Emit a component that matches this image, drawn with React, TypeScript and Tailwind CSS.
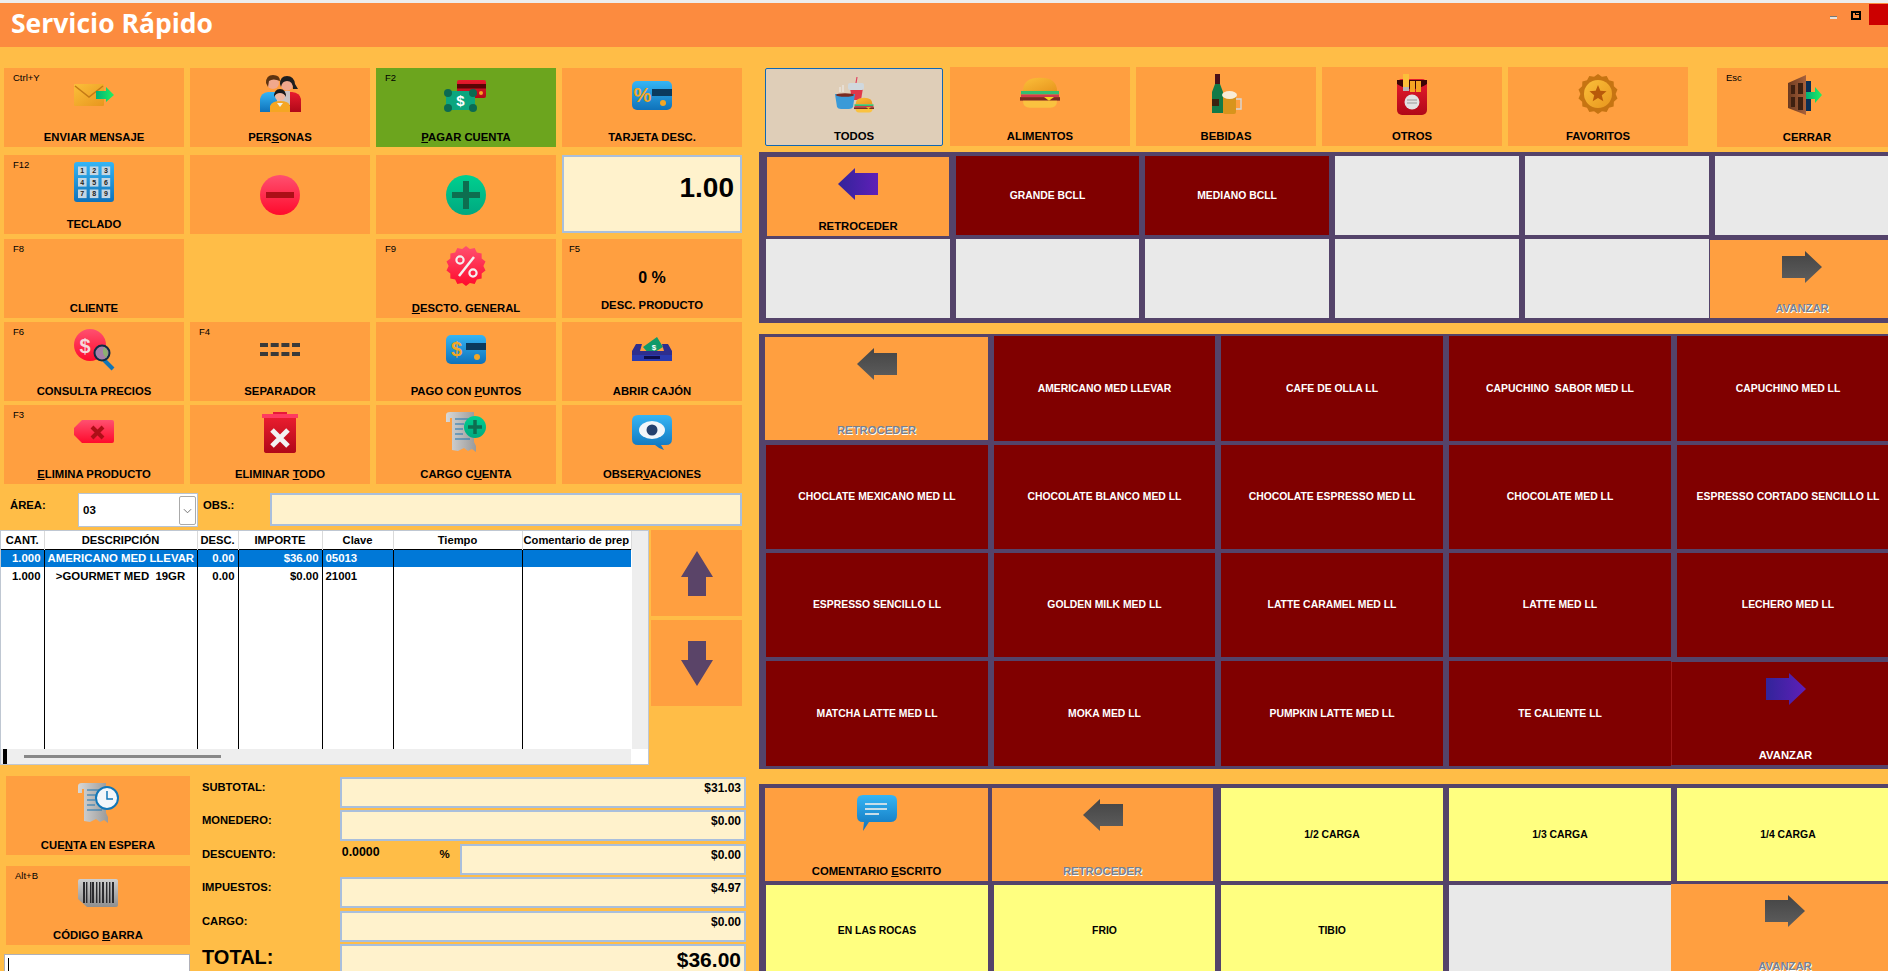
import React from "react";

type Kid = React.ReactNode;
const S = ({ children }: { children: Kid }) => (
  <svg viewBox="0 0 40 40" className="w-10 h-10 block overflow-visible">{children}</svg>
);
const burst = (n: number, R: number, r: number, cx = 20, cy = 20) =>
  Array.from({ length: n * 2 }, (_, i) => {
    const a = (Math.PI * i) / n;
    const q = i % 2 ? r : R;
    return `${(cx + q * Math.sin(a)).toFixed(2)},${(cy - q * Math.cos(a)).toFixed(2)}`;
  }).join(" ");

const Defs = () => (
  <svg className="absolute w-0 h-0">
    <defs>
      <linearGradient id="gR" x1="0" y1="0" x2="0" y2="1"><stop offset="0" stopColor="#FF5070" /><stop offset="1" stopColor="#FF0A2C" /></linearGradient>
      <linearGradient id="gRD" x1="0" y1="0" x2="0" y2="1"><stop offset="0" stopColor="#E81C2E" /><stop offset="1" stopColor="#B00818" /></linearGradient>
      <linearGradient id="gG" x1="0" y1="0" x2="0" y2="1"><stop offset="0" stopColor="#00D08F" /><stop offset="1" stopColor="#00A880" /></linearGradient>
      <linearGradient id="gB" x1="0" y1="0" x2="0" y2="1"><stop offset="0" stopColor="#35B5F5" /><stop offset="1" stopColor="#0F72BA" /></linearGradient>
      <linearGradient id="gO" x1="0" y1="0" x2="1" y2="1"><stop offset="0" stopColor="#FBBF3A" /><stop offset="1" stopColor="#E8961E" /></linearGradient>
      <linearGradient id="gY" x1="0" y1="0" x2="1" y2="0"><stop offset="0" stopColor="#D8D8D8" /><stop offset="1" stopColor="#9A9A9A" /></linearGradient>
      <linearGradient id="gGy" x1="0" y1="0" x2="0" y2="1"><stop offset="0" stopColor="#CFCFCF" /><stop offset="1" stopColor="#8F8F8F" /></linearGradient>
      <linearGradient id="gA" x1="0" y1="0" x2="0" y2="1"><stop offset="0" stopColor="#444444" /><stop offset="1" stopColor="#5E5E5E" /></linearGradient>
      <linearGradient id="gP" x1="0" y1="0" x2="1" y2="0"><stop offset="0" stopColor="#32249A" /><stop offset="1" stopColor="#5F1FB8" /></linearGradient>
      <linearGradient id="gAr" x1="0" y1="0" x2="1" y2="0"><stop offset="0" stopColor="#00B27A" /><stop offset="1" stopColor="#22F060" /></linearGradient>
      <linearGradient id="gBrown" x1="0" y1="0" x2="1" y2="0"><stop offset="0" stopColor="#6B3A20" /><stop offset="1" stopColor="#A8623C" /></linearGradient>
    </defs>
  </svg>
);

const Mail = () => (
  <S>
    <rect x="0" y="9" width="30" height="22" rx="1" fill="url(#gO)" />
    <path d="M1 11 L15 22 L29 11" fill="none" stroke="#C47A16" strokeWidth="1.5" />
    <path d="M22 16 H32 V12 L40 20 L32 27 V24 H22 Z" fill="url(#gAr)" />
  </S>
);
const People = () => (
  <S>
    <path d="M0 37 V24 Q1 18 8 17 L18 17 V37 Z" fill="url(#gB)" />
    <path d="M22 17 L32 17 Q40 18 41 24 V37 H22 Z" fill="url(#gRD)" />
    <rect x="17" y="16" width="13" height="14" fill="#C9C4C4" />
    <circle cx="13" cy="8" r="6" fill="#F0A88C" />
    <path d="M6 8 Q6 0 13 0 Q20 0 20 6 Q13 3 9 6 L8 12 Z" fill="#5E3410" />
    <circle cx="27" cy="9" r="6.5" fill="#F0A88C" />
    <path d="M20 9 Q20 1 27 1 Q34 1 35 9 L38 14 L33 14 Q33 6 27 6 Q22 6 21 12 Z" fill="#1E1E1E" />
    <path d="M10 37 V31 Q12 26 20 26 Q29 26 30 31 V37 Z" fill="#F5A623" />
    <circle cx="20" cy="21" r="5" fill="#F0B8A0" />
    <path d="M14 22 Q14 14 20 14 Q26 14 26 22 Q24 18 20 18 Q16 18 14 22 Z" fill="#1A1A1A" />
    <path d="M17 28 L20 32 L23 28 Z" fill="#F0F0E8" />
  </S>
);
const Pay = () => (
  <S>
    <rect x="11" y="5" width="29" height="18" rx="2" fill="url(#gRD)" />
    <rect x="11" y="9" width="29" height="4.5" fill="#5A0505" />
    <circle cx="35" cy="18" r="2" fill="#F5A623" />
    <rect x="0" y="16" width="29" height="19" rx="2" fill="#0CA67F" />
    <circle cx="2" cy="18" r="4" fill="#0B6A52" />
    <circle cx="27" cy="18" r="4" fill="#0B6A52" />
    <circle cx="2" cy="33" r="4" fill="#0B6A52" />
    <circle cx="27" cy="33" r="4" fill="#0B6A52" />
    <text x="14.5" y="30.5" textAnchor="middle" fontSize="15" fontWeight="700" fill="#fff" fontFamily="Liberation Sans">$</text>
  </S>
);
const CardIcon = ({ sym }: { sym: string }) => (
  <S>
    <rect x="0" y="6" width="40" height="29" rx="5" fill="url(#gB)" />
    <rect x="20" y="14" width="20" height="7" fill="#0B3A5E" />
    <circle cx="31" cy="28" r="3" fill="#F5A623" />
    <text x="10.5" y="27" textAnchor="middle" fontSize="20" fontWeight="700" fill="#F5A623" fontFamily="Liberation Sans">{sym}</text>
  </S>
);
const Keypad = () => (
  <S>
    <rect x="0" y="0" width="40" height="40" rx="3" fill="url(#gB)" />
    {[1, 2, 3, 4, 5, 6, 7, 8, 9].map((n, i) => {
      const x = 4 + (i % 3) * 11.8;
      const y = 4.5 + Math.floor(i / 3) * 11.5;
      return (
        <g key={n}>
          <rect x={x} y={y} width="8.6" height="8.6" fill="#C5D6E2" />
          <text x={x + 4.3} y={y + 6.6} textAnchor="middle" fontSize="7" fontWeight="700" fill="#222" fontFamily="Liberation Sans">{n}</text>
        </g>
      );
    })}
  </S>
);
const Minus = () => (
  <S>
    <circle cx="20" cy="20" r="20" fill="url(#gR)" />
    <rect x="6" y="17" width="28" height="6" fill="#AD0F17" />
  </S>
);
const Plus = () => (
  <S>
    <circle cx="20" cy="20" r="20" fill="url(#gG)" />
    <rect x="6" y="17" width="28" height="6" fill="#0E6E50" />
    <rect x="17" y="6" width="6" height="28" fill="#0E6E50" />
  </S>
);
const Badge = () => (
  <S>
    <polygon points={burst(14, 20, 17.4)} fill="url(#gR)" />
    <path d="M28 11 L13 30" stroke="#F4F0F0" strokeWidth="2.5" />
    <circle cx="14" cy="14" r="3.6" fill="none" stroke="#F4F0F0" strokeWidth="2.2" />
    <circle cx="27" cy="27" r="3.6" fill="none" stroke="#F4F0F0" strokeWidth="2.2" />
  </S>
);
const Search = () => (
  <S>
    <circle cx="16" cy="16" r="16" fill="url(#gR)" />
    <text x="11" y="24" textAnchor="middle" fontSize="20" fontWeight="700" fill="#F5D8DC" fontFamily="Liberation Sans">$</text>
    <path d="M30 31 L39 40" stroke="#1275B5" strokeWidth="4" />
    <circle cx="28" cy="24" r="7.5" fill="#A57FA8" stroke="#0D2C44" strokeWidth="2" />
    <path d="M30 18 A7 7 0 0 1 32 29 Q27 24 30 18 Z" fill="#8CB070" />
  </S>
);
const Sep = () => (
  <S>
    {[14, 23].map((y) =>
      [0, 10.7, 21.4, 32].map((x) => <rect key={`${x}${y}`} x={x} y={y} width="8" height="4" fill="#3A3A3A" />)
    )}
  </S>
);
const Drawer = () => (
  <S>
    <path d="M11 18 L25 8 L31 18 L18 26 Z" fill="#0F9A6A" />
    <text x="22" y="21" textAnchor="middle" fontSize="8" fontWeight="700" fill="#fff" fontFamily="Liberation Sans">$</text>
    <path d="M4 15 H10 L8 22 H32 L30 15 H36 L40 22 V32 H0 V22 Z" fill="#2E2E8E" />
    <rect x="0" y="26" width="40" height="6" fill="#2A3AB0" />
    <rect x="12" y="27" width="16" height="3" fill="#0E0E4A" />
  </S>
);
const Back = () => (
  <S>
    <path d="M8 8 H38 Q40 8 40 10 V29 Q40 31 38 31 H8 L0 23 V16 Z" fill="url(#gR)" />
    <path d="M18 15 L29 26 M29 15 L18 26" stroke="#AD0F17" strokeWidth="4" />
  </S>
);
const Trash = () => (
  <S>
    <g transform="translate(2 0)">
      <rect x="11" y="0" width="14" height="3" fill="#E8183A" />
      <rect x="0" y="2" width="36" height="4" fill="#FF3A60" />
      <path d="M2 6 H34 V39 Q34 41 31 41 H5 Q2 41 2 39 Z" fill="url(#gRD)" />
      <path d="M10 18 L26 34 M26 18 L10 34" stroke="#F2F2F2" strokeWidth="5" />
    </g>
  </S>
);
const Scroll = () => (
  <>
    <path d="M0 3 Q0 0 4 0 H28 V30 L30 34 L30 40 L26 37 L22 39 L18 36 L12 39 L6 38 V6 H4 V10 H0 Z" fill="url(#gY)" />
    <path d="M9 7 H22 M9 12 H18 M9 17 H17 M9 22 H17 M9 27 H24" stroke="#1A75B0" strokeWidth="1.2" />
  </>
);
const ReceiptPlus = () => (
  <S>
    <Scroll />
    <circle cx="29" cy="15" r="11" fill="url(#gG)" />
    <path d="M22 15 H36 M29 8 V22" stroke="#0E6E50" strokeWidth="3.5" />
  </S>
);
const ReceiptClock = () => (
  <S>
    <Scroll />
    <circle cx="29" cy="15" r="11" fill="#F2F6FA" stroke="#1277B8" strokeWidth="2" />
    <path d="M29 8 V16 H35" fill="none" stroke="#1277B8" strokeWidth="1.5" />
  </S>
);
const Eye = () => (
  <S>
    <g transform="translate(0 3)">
      <path d="M6 0 H34 Q40 0 40 6 V24 Q40 30 34 30 H29 L32 35 Q26 33 23 30 H6 Q0 30 0 24 V6 Q0 0 6 0 Z" fill="url(#gB)" />
      <ellipse cx="20" cy="15" rx="13" ry="9" fill="#F2F6FA" />
      <circle cx="20" cy="15" r="5.5" fill="#24406E" />
    </g>
  </S>
);
const Barcode = () => (
  <S>
    <path d="M0 8 Q0 6 2 6 H38 Q40 6 40 8 V32 Q40 34 38 34 H9 L0 26 Z" fill="url(#gGy)" />
    {[5, 8, 12, 14, 18, 21, 24, 28, 31, 34].map((x, i) => (
      <rect key={x} x={x} y="9" width={i % 3 === 0 ? 2 : 1.4} height="21" fill="#2A2A2E" />
    ))}
  </S>
);
const ArrowL = ({ fill }: { fill: string }) => (
  <S>
    <polygon points="0,20 17,4 17,9 40,9 40,31 17,31 17,36" fill={fill} />
  </S>
);
const ArrowR = ({ fill }: { fill: string }) => (
  <S>
    <polygon points="40,20 23,4 23,9 0,9 0,31 23,31 23,36" fill={fill} />
  </S>
);
const BurgerShape = () => (
  <>
    <path d="M3 17 Q3 2 20 2 Q37 2 37 17 Z" fill="url(#gO)" />
    <rect x="1" y="17" width="38" height="4" fill="#33C070" />
    <rect x="1" y="21" width="38" height="3" fill="#D23A4C" />
    <rect x="0" y="24" width="40" height="4" fill="#7A2A20" />
    <path d="M24 24 H34 L29 28 Z" fill="#F8D020" />
    <path d="M3 28 H37 Q37 36 30 36 H10 Q3 36 3 28 Z" fill="#FAC240" />
  </>
);
const Burger = () => <S><g transform="translate(0 2) scale(1 0.88)"><BurgerShape /></g></S>;
const Combo = () => (
  <S>
    <path d="M16 12 L29 12 L27 24 H18 Z" fill="#E0384A" />
    <rect x="14" y="7" width="16" height="7" rx="2" fill="#D0D8DE" />
    <path d="M22 7 L23 1" stroke="#E04060" strokeWidth="1.2" />
    <path d="M9 9 V16 M6 11 V16" stroke="#F0F0F0" strokeWidth="1.2" opacity="0.8" />
    <path d="M1 18 H21 L19 31 Q18 33 15 33 H7 Q4 33 3 31 Z" fill="#3A9AD8" />
    <ellipse cx="11" cy="19" rx="9" ry="1.8" fill="#7A2A20" />
    <g transform="translate(20 21) scale(0.5 0.43)"><BurgerShape /></g>
  </S>
);
const Drinks = () => (
  <S>
    <rect x="9" y="0" width="5" height="10" fill="#4A1018" />
    <path d="M9 10 H14 L17 18 V39 H6 V18 Z" fill="#127A48" />
    <rect x="6" y="25" width="7" height="7" fill="#3A2210" />
    <path d="M17 21 H30 V38 Q30 40 28 40 H19 Q17 40 17 38 Z" fill="#D8941C" />
    <ellipse cx="23.5" cy="21" rx="7.5" ry="4" fill="#F8ECD8" />
    <path d="M30 25 H35 V35 H30" fill="none" stroke="#D8D8D8" strokeWidth="1.4" />
  </S>
);
const Fries = () => (
  <S>
    <rect x="5" y="5" width="30" height="36" rx="5" fill="url(#gRD)" />
    <path d="M5 6 H35 V10 Q20 20 5 10 Z" fill="#3A0606" />
    <rect x="11" y="0" width="6" height="17" fill="#FBBF3A" />
    <rect x="11" y="13" width="6" height="4" fill="#B8B8B8" />
    <rect x="18" y="7" width="5" height="11" fill="#F5A623" />
    <rect x="24" y="7" width="5" height="11" fill="#F5A623" />
    <circle cx="20" cy="28" r="7.5" fill="#E2E2E2" />
    <path d="M15 26 H25 M15 29 H25" stroke="#999" strokeWidth="1.2" />
  </S>
);
const Medal = () => (
  <S>
    <polygon points={burst(14, 20, 17.6)} fill="#C67412" />
    <circle cx="20" cy="20" r="14" fill="url(#gO)" />
    <polygon points={burst(5, 9, 4)} fill="#B85A0A" />
  </S>
);
const Door = () => (
  <S>
    <rect x="19" y="6" width="5" height="30" fill="#0B2F55" />
    <path d="M1 8 L19 0 V40 L1 33 Z" fill="url(#gBrown)" />
    <path d="M4 10 H8 V19 H4 Z M11 8 H16 V19 H11 Z M4 22 H8 V32 H4 Z M11 22 H16 V35 H11 Z" fill="#3E2010" />
    <path d="M19 17 H28 V12 L35 20 L28 28 V24 H19 Z" fill="url(#gAr)" />
  </S>
);
const Comment = () => (
  <S>
    <path d="M6 0 H34 Q40 0 40 6 V20 Q40 27 34 27 H12 L6 36 L7 27 H6 Q0 27 0 21 V6 Q0 0 6 0 Z" fill="url(#gB)" />
    <path d="M8 9 H30 M8 14 H30 M8 19 H22" stroke="#C8DDE8" strokeWidth="2" />
  </S>
);

const Btn = ({
  label, hot, icon, className = "", tone = "", center = false,
}: {
  label?: Kid; hot?: string; icon?: Kid; className?: string; tone?: string; center?: boolean;
}) => (
  <div className={`relative flex flex-col items-center ${center ? "justify-center" : "justify-between"} pt-[7px] pb-[3px] ${tone || "bg-[#FF9F40]"} ${className}`}>
    {hot && <span className="absolute left-[9px] top-[3px] text-[9.5px] leading-[13px] font-normal text-black">{hot}</span>}
    <div className="w-10 h-10 shrink-0">{icon}</div>
    {label && <div className="text-[11.3px] leading-[14px] font-bold whitespace-nowrap">{label}</div>}
  </div>
);
const Dis = ({ children }: { children: Kid }) => (
  <span className="text-[#76818F] [text-shadow:1px_1px_0_#ffffff]">{children}</span>
);

const Cell = ({ t, tone = "maroon" }: { t?: string; tone?: "maroon" | "yellow" | "grey" }) => (
  <div
    className={`flex items-center justify-center whitespace-pre text-[10.4px] font-bold ${
      tone === "maroon" ? "bg-[#800000] text-white" : tone === "yellow" ? "bg-[#FFFF80] text-black" : "bg-[#E9E9E9]"
    }`}
  >
    {t}
  </div>
);

const Field = ({ v, big = false, className = "" }: { v: string; big?: boolean; className?: string }) => (
  <div className={`h-[31px] bg-[#FFF2CC] border-2 border-[#A9BFDC] text-right pr-[3px] font-bold ${big ? "text-[21px] leading-[26px] pt-[1px]" : "text-[12px] leading-[14px] pt-[2px]"} ${className}`}>
    {v}
  </div>
);
const TotalRow = ({ l, v }: { l: string; v: string }) => (
  <div className="flex h-[31px] mb-[2.4px]">
    <div className="w-[139px] pl-px text-[11.2px] leading-[14px] pt-[3px] font-bold">{l}</div>
    <Field v={v} className="w-[406px]" />
  </div>
);

const thead = ["CANT.", "DESCRIPCIÓN", "DESC.", "IMPORTE", "Clave", "Tiempo", "Comentario de prep"];
const widths = ["w-[43px]", "w-[153px]", "w-[41px]", "w-[84px]", "w-[71px]", "w-[129px]", "w-[109px]"];
const td = "border-r border-black px-[3px] whitespace-pre overflow-hidden";

export default function App() {
  return (
    <div className="w-[1888px] h-[971px] overflow-hidden bg-[#FFBD47] text-black font-['Liberation_Sans',Arial,sans-serif] flex flex-col">
      <Defs />
      <div className="h-[3px] bg-[#EDEDED] shrink-0" />
      <header className="h-[44px] shrink-0 bg-[#FC8B3F] flex justify-between">
        <h1 className="pl-[11px] text-white font-['Open_Sans',sans-serif] font-bold text-[26.5px] leading-[40px] whitespace-nowrap">Servicio Rápido</h1>
        <div className="flex items-start">
          <div className="w-[7px] h-[3px] mt-[13px] bg-[#E8E0D8] border-t border-[#777]" />
          <div className="relative w-[10px] h-[9px] ml-[14px] mt-[8px] border-2 border-black">
            <div className="absolute -top-[2px] -right-[2px] w-[6px] h-[4px] border border-black" />
          </div>
          <div className="w-[19px] h-[21px] ml-[8px] mt-px bg-[#CC0000]" />
        </div>
      </header>

      <div className="flex-1 flex min-h-0">
        {/* left side */}
        <section className="w-[750px] shrink-0 pt-[21px]">
          <div className="ml-[4px] grid grid-cols-[180px_180px_180px_180px] gap-x-[6px] grid-rows-[79px_8px_79px_5px_79px_4px_79px_4px_79px] w-[738px]">
            <Btn hot="Ctrl+Y" icon={<Mail />} label="ENVIAR MENSAJE" />
            <Btn icon={<People />} label={<>PER<u>S</u>ONAS</>} />
            <Btn hot="F2" tone="bg-[#6CA51E]" icon={<Pay />} label={<><u>P</u>AGAR CUENTA</>} />
            <Btn icon={<CardIcon sym="%" />} label="TARJETA DESC." />
            <div className="col-span-4" />
            <Btn hot="F12" icon={<Keypad />} label="TECLADO" />
            <Btn center icon={<Minus />} className="!pt-0 !pb-0" />
            <Btn center icon={<Plus />} className="!pt-0 !pb-0" />
            <div className="h-[78px] bg-[#FFF2CC] border-2 border-[#A9BFDC] text-right pr-[6px] pt-[15px] text-[28px] leading-[32px] font-bold">1.00</div>
            <div className="col-span-4" />
            <Btn hot="F8" label="CLIENTE" />
            <div />
            <Btn hot="F9" icon={<Badge />} label={<><u>D</u>ESCTO. GENERAL</>} />
            <div className="relative bg-[#FF9F40] flex flex-col items-center">
              <span className="absolute left-[7px] top-[3px] text-[9.5px] leading-[13px]">F5</span>
              <div className="mt-[30px] text-[16px] leading-[18px] font-bold">0 %</div>
              <div className="mt-[11px] text-[11.3px] leading-[14px] font-bold">DESC. PRODUCTO</div>
            </div>
            <div className="col-span-4" />
            <Btn hot="F6" icon={<Search />} label="CONSULTA PRECIOS" />
            <Btn hot="F4" icon={<Sep />} label="SEPARADOR" />
            <Btn icon={<CardIcon sym="$" />} label={<>PAGO CON <u>P</u>UNTOS</>} />
            <Btn icon={<Drawer />} label="ABRIR CAJÓN" />
            <div className="col-span-4" />
            <Btn hot="F3" icon={<Back />} label={<><u>E</u>LIMINA PRODUCTO</>} />
            <Btn icon={<Trash />} label={<>ELIMINAR <u>T</u>ODO</>} />
            <Btn icon={<ReceiptPlus />} label={<>CARGO C<u>U</u>ENTA</>} />
            <Btn icon={<Eye />} label={<>OBSER<u>V</u>ACIONES</>} />
          </div>

          <div className="mt-[9px] flex h-[34px] text-[11.3px] font-bold">
            <div className="w-[78px] pl-[10px] pt-[5px] leading-[14px]">ÁREA:</div>
            <div className="w-[120px] h-[34px] bg-white border border-[#B8C4D4] flex justify-between">
              <span className="pl-[4px] pt-[9px] text-[11.5px] leading-[14px]">03</span>
              <div className="w-[17px] m-px mt-[2px] h-[29px] border border-[#AAAAAA] rounded-[2px] flex items-center justify-center">
                <svg viewBox="0 0 10 6" className="w-[9px] h-[6px]"><path d="M1 1 L5 5 L9 1" fill="none" stroke="#666" strokeWidth="1" /></svg>
              </div>
            </div>
            <div className="w-[72px] pl-[5px] pt-[5px] leading-[14px]">OBS.:</div>
            <div className="w-[472px] h-[33px] bg-[#FFF2CC] border-2 border-[#A9BFDC]" />
          </div>

          <div className="mt-[3px] flex">
            <div className="w-[649px] h-[235px] bg-white border border-[#BFC7D2] flex flex-col">
              <div className="flex h-[218px]">
                <table className="w-[630px] h-[218px] table-fixed border-collapse text-[11.4px] font-bold leading-[14px]">
                  <colgroup>{widths.map((w) => <col key={w} className={w} />)}</colgroup>
                  <tbody>
                    <tr className="h-[18px] border-b border-black">
                      {thead.map((h, i) => (
                        <td key={h} className={`border-r border-[#DADADA] text-[11.2px] whitespace-nowrap overflow-hidden ${i === 6 ? "text-left pl-px" : "text-center"}`}>{h}</td>
                      ))}
                    </tr>
                    <tr className="h-[18px] bg-[#0078D7] text-white">
                      <td className={`${td} text-right`}>1.000</td>
                      <td className={`${td} text-center`}>AMERICANO MED LLEVAR</td>
                      <td className={`${td} text-right`}>0.00</td>
                      <td className={`${td} text-right`}>$36.00</td>
                      <td className={`${td} text-left`}>05013</td>
                      <td className={td} />
                      <td className="" />
                    </tr>
                    <tr className="h-[18px]">
                      <td className={`${td} text-right`}>1.000</td>
                      <td className={`${td} text-center`}>{">GOURMET MED  19GR"}</td>
                      <td className={`${td} text-right`}>0.00</td>
                      <td className={`${td} text-right`}>$0.00</td>
                      <td className={`${td} text-left`}>21001</td>
                      <td className={td} />
                      <td className="" />
                    </tr>
                    <tr>
                      {[0, 1, 2, 3, 4, 5].map((i) => <td key={i} className={td} />)}
                      <td />
                    </tr>
                  </tbody>
                </table>
                <div className="w-[17px] bg-[#EEEEEE]" />
              </div>
              <div className="w-[630px] h-[15px] bg-[#EEEEEE] flex items-center">
                <div className="w-[4px] h-[15px] ml-[2px] bg-black" />
                <div className="w-[197px] h-[3px] ml-[17px] bg-[#888888]" />
              </div>
            </div>
            <div className="w-[91px] ml-[2px] flex flex-col gap-[4px]">
              <div className="h-[86px] bg-[#FF9F40] flex items-center justify-center">
                <svg viewBox="0 0 32 45" className="w-8 h-[45px]"><polygon points="16,0 32,26 25,26 25,45 7,45 7,26 0,26" fill="#5A4468" /></svg>
              </div>
              <div className="h-[86px] bg-[#FF9F40] flex items-center justify-center">
                <svg viewBox="0 0 32 45" className="w-8 h-[45px]"><polygon points="16,45 32,19 25,19 25,0 7,0 7,19 0,19" fill="#5A4468" /></svg>
              </div>
            </div>
          </div>

          <div className="mt-[11px] flex">
            <div className="w-[184px] ml-[6px] shrink-0">
              <Btn icon={<ReceiptClock />} label={<>CUE<u>N</u>TA EN ESPERA</>} className="h-[79px]" />
              <Btn hot="Alt+B" icon={<Barcode />} label={<>CÓDIGO <u>B</u>ARRA</>} className="h-[79px] mt-[11px]" />
              <div className="w-[186px] h-[40px] -ml-[2px] mt-[9px] bg-white border border-[#B0B0B8] pl-[3px] pt-[3px]">
                <div className="w-px h-[14px] bg-black" />
              </div>
            </div>
            <div className="ml-[11px] pt-px w-[545px] shrink-0">
              <TotalRow l="SUBTOTAL:" v="$31.03" />
              <TotalRow l="MONEDERO:" v="$0.00" />
              <div className="flex h-[31px] mb-[2.4px]">
                <div className="w-[141px] pl-px text-[11.2px] leading-[14px] pt-[3px] font-bold">DESCUENTO:</div>
                <div className="w-[98px] text-[12.4px] leading-[14px] pt-px font-bold">0.0000</div>
                <div className="w-[20px] text-[11.5px] leading-[14px] pt-[3px] font-bold">%</div>
                <Field v="$0.00" className="w-[287px]" />
              </div>
              <TotalRow l="IMPUESTOS:" v="$4.97" />
              <TotalRow l="CARGO:" v="$0.00" />
              <div className="flex h-[31px]">
                <div className="w-[139px] pl-px text-[20px] leading-[24px] pt-[1px] font-bold">TOTAL:</div>
                <Field big v="$36.00" className="w-[406px]" />
              </div>
            </div>
          </div>
        </section>

        {/* right side */}
        <section className="flex-1 min-w-0 overflow-hidden">
          <div className="flex items-start pt-[20px] pl-[15px] h-[100px]">
            <Btn tone="bg-[#DFCEB8] border border-[#0F67B3] rounded-[2px]" icon={<Combo />} label="TODOS" className="w-[178px] h-[78px] mt-px shrink-0 !pb-[2px]" />
            <Btn icon={<Burger />} label="ALIMENTOS" className="w-[180px] h-[79px] ml-[7px] shrink-0" />
            <Btn icon={<Drinks />} label="BEBIDAS" className="w-[180px] h-[79px] ml-[6px] shrink-0" />
            <Btn icon={<Fries />} label="OTROS" className="w-[180px] h-[79px] ml-[6px] shrink-0" />
            <Btn icon={<Medal />} label="FAVORITOS" className="w-[180px] h-[79px] ml-[6px] shrink-0" />
            <Btn hot="Esc" icon={<Door />} label="CERRAR" className="w-[180px] h-[79px] ml-[29px] mt-px shrink-0" />
          </div>

          <div className="mt-[5px] ml-[9px] h-[171px] w-[1129px] overflow-hidden bg-[#54436A] pt-[4px] pl-[7px]">
            <div className="grid grid-cols-[184px_183px_184px_184px_184px_184px] gap-x-[6px] grid-rows-[79px_79px] gap-y-[4px] w-[1140px]">
              <Btn icon={<ArrowL fill="url(#gP)" />} label="RETROCEDER" className="h-[79px] mt-px ml-px w-[182px]" />
              <Cell t="GRANDE BCLL" />
              <Cell t="MEDIANO BCLL" />
              <Cell tone="grey" />
              <Cell tone="grey" />
              <Cell tone="grey" />
              <Cell tone="grey" />
              <Cell tone="grey" />
              <Cell tone="grey" />
              <Cell tone="grey" />
              <Cell tone="grey" />
              <Btn icon={<ArrowR fill="url(#gA)" />} label={<Dis>AVANZAR</Dis>} className="h-[78px] mt-px -ml-[5px] w-[184px]" />
            </div>
          </div>

          <div className="mt-[11px] ml-[9px] h-[435px] w-[1129px] overflow-hidden bg-[#54436A] pt-[2px] pl-[7px]">
            <div className="grid grid-cols-[222px_221px_222px_222px_222px] gap-x-[6px] grid-rows-[105px_104px_104px_105px] gap-y-[4px] w-[1140px]">
              <Btn icon={<ArrowL fill="url(#gA)" />} label={<Dis>RETROCEDER</Dis>} className="h-[103px] mt-px -ml-px" />
              <Cell t="AMERICANO MED LLEVAR" />
              <Cell t="CAFE DE OLLA LL" />
              <Cell t="CAPUCHINO  SABOR MED LL" />
              <Cell t="CAPUCHINO MED LL" />
              <Cell t="CHOCLATE MEXICANO MED LL" />
              <Cell t="CHOCOLATE BLANCO MED LL" />
              <Cell t="CHOCOLATE ESPRESSO MED LL" />
              <Cell t="CHOCOLATE MED LL" />
              <Cell t="ESPRESSO CORTADO SENCILLO LL" />
              <Cell t="ESPRESSO SENCILLO LL" />
              <Cell t="GOLDEN MILK MED LL" />
              <Cell t="LATTE CARAMEL MED LL" />
              <Cell t="LATTE MED LL" />
              <Cell t="LECHERO MED LL" />
              <Cell t="MATCHA LATTE MED LL" />
              <Cell t="MOKA MED LL" />
              <Cell t="PUMPKIN LATTE MED LL" />
              <Cell t="TE CALIENTE LL" />
              <Btn tone="bg-[#800000] border-l border-[#A01818]" icon={<ArrowR fill="url(#gP)" />} label={<span className="text-white">AVANZAR</span>} className="h-[103px] mt-px -ml-[6px] w-[228px]" />
            </div>
          </div>

          <div className="mt-[15px] ml-[9px] h-[187px] w-[1129px] overflow-hidden bg-[#54436A] pt-[4px] pl-[7px]">
            <div className="grid grid-cols-[222px_221px_222px_222px_222px] gap-x-[6px] grid-rows-[93px_92px] gap-y-[4px] w-[1140px]">
              <Btn icon={<Comment />} label={<>COMENTARIO <u>E</u>SCRITO</>} className="h-[93px] -ml-px" />
              <Btn icon={<ArrowL fill="url(#gA)" />} label={<Dis>RETROCEDER</Dis>} className="h-[93px] -ml-[2px] w-[221px]" />
              <Cell t="1/2 CARGA" tone="yellow" />
              <Cell t="1/3 CARGA" tone="yellow" />
              <Cell t="1/4 CARGA" tone="yellow" />
              <Cell t="EN LAS ROCAS" tone="yellow" />
              <Cell t="FRIO" tone="yellow" />
              <Cell t="TIBIO" tone="yellow" />
              <Cell tone="grey" />
              <Btn icon={<ArrowR fill="url(#gA)" />} label={<Dis>AVANZAR</Dis>} className="h-[92px] -mt-px -ml-[6px] w-[228px]" />
            </div>
          </div>
        </section>
      </div>
    </div>
  );
}
